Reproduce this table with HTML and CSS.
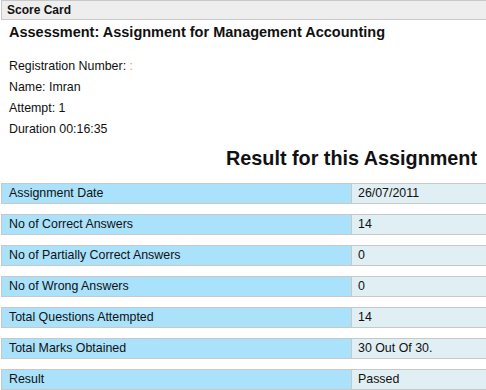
FILE: index.html
```html
<!DOCTYPE html>
<html>
<head>
<meta charset="utf-8">
<link rel="stylesheet" href="styles.css">
</head>
<body>
<div class="header">Score Card</div>
<h1 class="title">Assessment: Assignment for Management Accounting</h1>
<div class="info">
  <div>Registration Number: <span class="accent">:</span></div>
  <div>Name: Imran</div>
  <div>Attempt: 1</div>
  <div>Duration 00:16:35</div>
</div>
<h2 class="result-title">Result for this Assignment</h2>
<div class="rows">
  <div class="row"><div class="label">Assignment Date</div><div class="value">26/07/2011</div></div>
  <div class="row"><div class="label">No of Correct Answers</div><div class="value">14</div></div>
  <div class="row"><div class="label">No of Partially Correct Answers</div><div class="value">0</div></div>
  <div class="row"><div class="label">No of Wrong Answers</div><div class="value">0</div></div>
  <div class="row"><div class="label">Total Questions Attempted</div><div class="value">14</div></div>
  <div class="row"><div class="label">Total Marks Obtained</div><div class="value">30 Out Of 30.</div></div>
  <div class="row"><div class="label">Result</div><div class="value">Passed</div></div>
</div>
</body>
</html>
```
FILE: styles.css
```css
html, body {
  margin: 0;
  padding: 0;
  background: #fff;
  overflow: hidden;
}
body {
  font-family: "Liberation Sans", Arial, sans-serif;
  color: #111;
}
.header {
  margin-left: 1px;
  height: 20px;
  box-sizing: border-box;
  border: 1px solid #c8c8c8;
  border-right: none;
  background: #eeeeee;
  font-weight: bold;
  font-size: 12px;
  line-height: 18px;
  padding-left: 5px;
}
.title {
  margin: 4px 0 0 9px;
  font-size: 14.5px;
  font-weight: bold;
  line-height: 17px;
}
.info {
  margin-top: 15px;
  padding-left: 9px;
  font-size: 12.4px;
  line-height: 21px;
}
.accent {
  color: #e8a050;
}
.result-title {
  margin: 6px 0 0 0;
  padding-right: 9px;
  text-align: right;
  font-size: 19.8px;
  font-weight: bold;
  line-height: 24px;
}
.rows {
  margin-top: 13px;
  margin-left: 1px;
  display: flex;
  flex-direction: column;
  gap: 10px;
}
.row {
  display: grid;
  grid-template-columns: 350px 1fr;
  height: 21px;
  box-sizing: border-box;
  border: 1px solid #c8c8c8;
  border-right: none;
  font-size: 12.4px;
  line-height: 19px;
}
.label {
  background: #aae2fb;
  border-right: 1px solid #c8c8c8;
  padding-left: 7px;
}
.value {
  background: #e0eff3;
  padding-left: 6px;
}
```
